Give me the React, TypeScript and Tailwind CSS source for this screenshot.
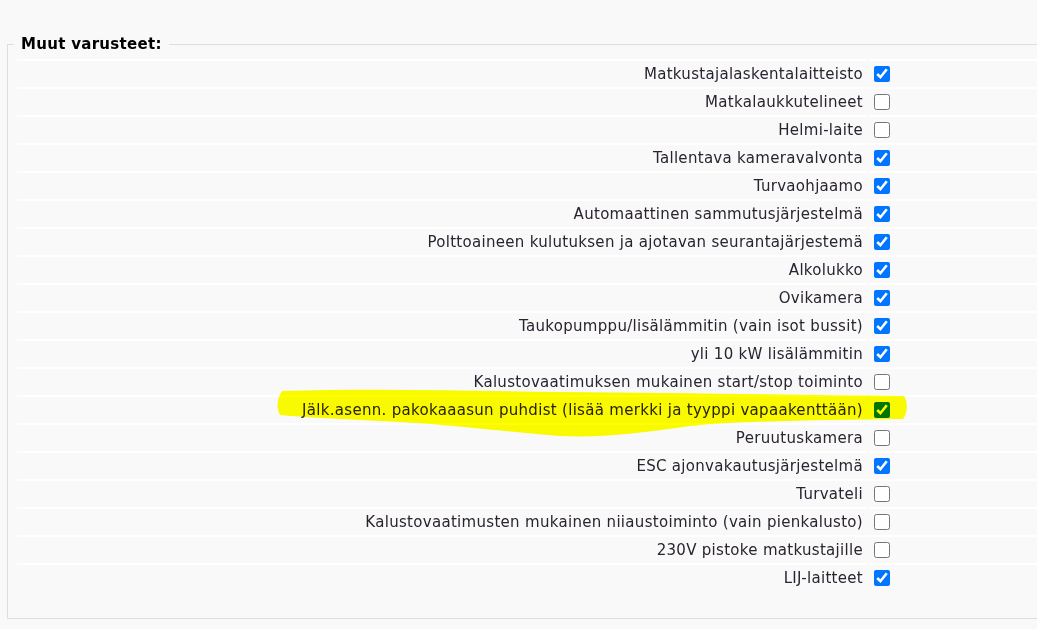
import { FunctionComponent } from "react";

type Item = { label: string; checked: boolean };

const items: Item[] = [
  { label: "Matkustajalaskentalaitteisto", checked: true },
  { label: "Matkalaukkutelineet", checked: false },
  { label: "Helmi-laite", checked: false },
  { label: "Tallentava kameravalvonta", checked: true },
  { label: "Turvaohjaamo", checked: true },
  { label: "Automaattinen sammutusjärjestelmä", checked: true },
  { label: "Polttoaineen kulutuksen ja ajotavan seurantajärjestemä", checked: true },
  { label: "Alkolukko", checked: true },
  { label: "Ovikamera", checked: true },
  { label: "Taukopumppu/lisälämmitin (vain isot bussit)", checked: true },
  { label: "yli 10 kW lisälämmitin", checked: true },
  { label: "Kalustovaatimuksen mukainen start/stop toiminto", checked: false },
  { label: "Jälk.asenn. pakokaaasun puhdist (lisää merkki ja tyyppi vapaakenttään)", checked: true },
  { label: "Peruutuskamera", checked: false },
  { label: "ESC ajonvakautusjärjestelmä", checked: true },
  { label: "Turvateli", checked: false },
  { label: "Kalustovaatimusten mukainen niiaustoiminto (vain pienkalusto)", checked: false },
  { label: "230V pistoke matkustajille", checked: false },
  { label: "LIJ-laitteet", checked: true },
];

const Row: FunctionComponent<{ item: Item }> = ({ item }) => (
  <div className="grid grid-cols-[849px_1fr] gap-x-[2px]">
    <div className="h-[28px] border-t-2 border-white flex items-center justify-end pr-[3px] text-[15px] tracking-[0.3px] text-[#2a2330]">
      {item.label}
    </div>
    <div className="h-[28px] border-t-2 border-white flex items-center pl-[6px]">
      <input
        type="checkbox"
        checked={item.checked}
        readOnly
        className="w-4 h-4 m-0"
      />
    </div>
  </div>
);

export default function App() {
  return (
    <div
      className="relative w-[1037px] h-[629px] overflow-hidden bg-[#f9f9f9]"
      style={{ fontFamily: '"DejaVu Sans", Verdana, sans-serif' }}
    >
      <fieldset className="ml-[7px] mt-[35px] w-[1100px] border border-[#dedede] pl-[9px] pb-[27px]">
        <legend className="-ml-[3px] px-[7px] text-[15px] font-bold tracking-[0.3px] text-black leading-[18px]">
          Muut varusteet:
        </legend>
        <div className="mt-[6px] flex flex-col">
          {items.map((item) => (
            <Row key={item.label} item={item} />
          ))}
        </div>
      </fieldset>

      {/* highlighter stroke */}
      <svg
        className="absolute left-0 top-0 pointer-events-none mix-blend-multiply"
        width="1037"
        height="629"
      >
        <path
          d="M282 391 C 380 388, 470 391, 560 392 C 680 393, 800 395, 904 396 C 908 402, 908 412, 903 419 C 820 420, 740 421, 690 426 C 640 433, 600 438, 560 436 C 520 433, 480 428, 430 424 C 380 420, 320 419, 280 415 C 276 408, 277 398, 282 391 Z"
          fill="#ffff00"
        />
      </svg>
    </div>
  );
}
